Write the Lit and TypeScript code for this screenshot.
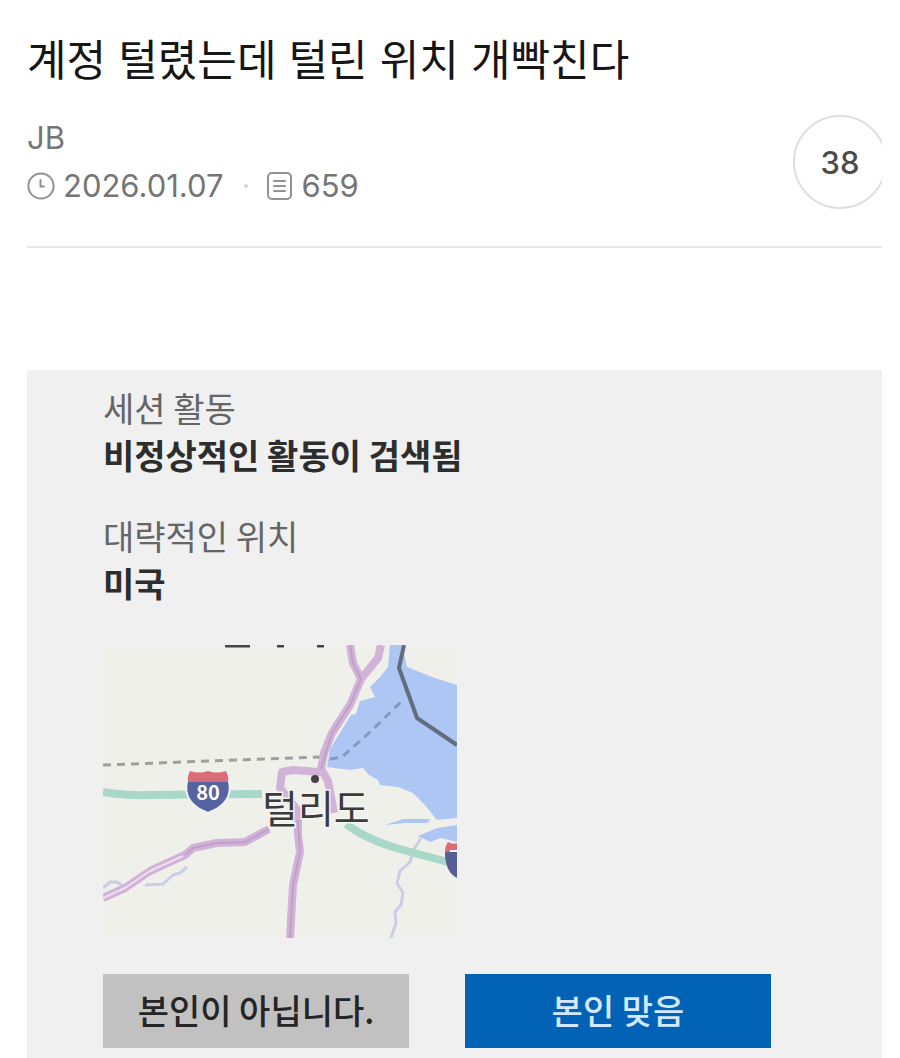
import { LitElement, css, html } from "lit";
import { customElement, property } from "lit/decorators.js";

@customElement("post-header")
class PostHeader extends LitElement {
  @property() heading = "";
  @property() author = "";
  @property() date = "";
  @property() views = "";
  @property() votes = "";

  static styles = css`
    :host {
      display: block;
      border-bottom: 2px solid #e8e8e8;
      overflow: hidden;
    }
    .title {
      margin: 0;
      padding-top: 28px;
      font-size: 43px;
      line-height: 64px;
      font-weight: 400;
      color: #161616;
    }
    .info {
      display: flex;
      align-items: center;
      justify-content: space-between;
      padding: 22px 0 36px;
    }
    .meta {
      color: #757575;
      font-size: 31px;
      line-height: 48px;
    }
    .row {
      display: flex;
      align-items: center;
    }
    .icon {
      width: 28px;
      height: 28px;
      fill: none;
      stroke: #929292;
      stroke-width: 2;
      stroke-linecap: round;
    }
    .date {
      margin-left: 8px;
    }
    .dot {
      width: 4px;
      height: 4px;
      margin: 0 18px 0 20px;
      border-radius: 50%;
      background: #d4d4d4;
    }
    .views {
      margin-left: 8px;
    }
    .votes {
      box-sizing: border-box;
      width: 94px;
      height: 94px;
      margin-right: -5px;
      padding: 0;
      border: 2px solid #dedede;
      border-radius: 50%;
      background: #fff;
      color: #4c4c4c;
      font: inherit;
      font-size: 31px;
      font-weight: 500;
    }
  `;

  render() {
    return html`
      <h1 class="title">${this.heading}</h1>
      <div class="info">
        <div class="meta">
          <div>${this.author}</div>
          <div class="row">
            <svg class="icon" viewBox="0 0 28 28" aria-hidden="true">
              <circle cx="14" cy="14" r="12.6" />
              <path d="M13.5 8v6.5H17" stroke-linejoin="round" />
            </svg>
            <time class="date" datetime="2026-01-07">${this.date}</time>
            <span class="dot"></span>
            <svg class="icon" viewBox="0 0 28 28" aria-hidden="true">
              <rect x="2" y="1" width="23" height="26" rx="4" />
              <path d="M8 9h11M8 14h11M8 19h11" />
            </svg>
            <span class="views">${this.views}</span>
          </div>
        </div>
        <button class="votes" type="button">${this.votes}</button>
      </div>
    `;
  }
}

@customElement("location-map")
class LocationMap extends LitElement {
  static styles = css`
    :host {
      display: block;
    }
    .map {
      display: block;
      width: 100%;
      background: #f0f0eb;
    }
    .line {
      fill: none;
      stroke-linejoin: round;
    }
    .water {
      fill: #adc6f3;
    }
    .road {
      stroke: #d2b3d8;
      stroke-width: 8;
    }
    .core {
      stroke: #c29fca;
      stroke-width: 2;
    }
    .highway {
      stroke: #a9d8c9;
      stroke-width: 8;
    }
    .creek {
      stroke: #c9cee6;
      stroke-width: 3;
    }
    .border {
      stroke: #626d80;
      stroke-width: 4;
    }
    .dash {
      stroke: #a19f9b;
      stroke-width: 3;
      stroke-dasharray: 8 6;
    }
    .wet {
      stroke: #8698bf;
    }
    .city {
      font-size: 39px;
      fill: #3b3b3b;
      stroke: #f4f4f0;
      stroke-width: 3;
      paint-order: stroke;
    }
    .route {
      font-size: 20px;
      font-weight: 700;
      fill: #fff;
    }
  `;

  render() {
    return html`
      <svg class="map" viewBox="0 0 354 293" role="img" aria-label="털리도">
        <path
          class="water"
          d="M287 0L285 22L277 32L267 42L272 52L257 56L253 69L248 70L227 104L224 122L247 125L260 123L266 130L275 135L277 140L295 142L310 148L322 160L334 175L354 173V40L332 33L304 22L299 0Z"
        />
        <path
          class="water"
          d="M282 180L300 174L327 174L325 178L302 178ZM315 191L334 183L354 180V197L338 193L327 197Z"
        />
        <path class="line creek" d="M0 243L7 237L14 237L22 242M42 240L60 239L70 230L77 228L84 222" />
        <path class="line creek" d="M318 193L311 204L307 217L297 226L294 238L300 248L298 260L292 267L293 278L288 293" />
        <path class="line highway" d="M0 147Q25 151 44 150L159 149" />
        <path class="line highway" d="M243 179Q264 195 300 205L345 217" />
        <path class="line dash" d="M0 120L80 117L217 112" />
        <path class="line dash wet" d="M227 114L239 112L267 87L300 55" />
        <path class="line road" d="M247 0L250 18L258 34L247 60L229 88L221 108L218 124L216 127L190 125L179 127L177 143L195 166L195 190L197 207L190 240L187 293" />
        <path class="line road" d="M278 0L275 13L258 34" />
        <path class="line road" d="M218 124L225 136L231 168" />
        <path class="line road" d="M0 253L22 243L47 226L82 210L90 203L114 198L142 197L166 184" />
        <path class="line core" d="M247 0L250 18L258 34L247 60L229 88L218 124" />
        <path class="line core" d="M195 175L197 207L190 240L187 293M82 210L90 203L114 198L142 197L166 184" />
        <path d="M0 253L22 243L47 226L80 211" class="line" stroke="#efe0ef" stroke-width="2" />
        <path class="line border" d="M301 0L296 23L314 73L354 100" />
        <path d="M122 1h25M174 1h7M214 1h7" class="line" stroke="#444" stroke-width="3" />
        <path
          d="M84 136H126Q131 158 105 168Q79 158 84 136Z"
          fill="#5564a0"
          stroke="#f1f2f5"
          stroke-width="2"
        />
        <path d="M85 137Q84 132 87 126Q96 129 105 126Q114 129 123 126Q126 132 125 137Z" fill="#d86d78" />
        <text class="route" x="105" y="155" text-anchor="middle">80</text>
        <path d="M342 207H354V233Q342 227 342 207Z" fill="#555f94" />
        <path d="M342 207Q342 201 345 197Q350 200 354 198V207Z" fill="#d86d78" />
        <path d="M347 206h7" stroke="#fff" stroke-width="2" />
        <circle cx="212" cy="134" r="4" fill="#4a3f4a" />
        <text class="city" x="159" y="178">털리도</text>
      </svg>
    `;
  }
}

@customElement("activity-panel")
class ActivityPanel extends LitElement {
  static styles = css`
    :host {
      display: block;
      box-sizing: border-box;
      padding: 14px 111px 10px 76px;
      background: #f0f0f0;
      font-size: 34px;
      line-height: 47px;
    }
    .facts {
      display: grid;
      gap: 34px;
      margin: 0;
    }
    .label {
      color: #656565;
    }
    .value {
      margin: 0;
      color: #2d2d2d;
      font-weight: 700;
    }
    .place {
      max-width: 354px;
      margin: 39px 0 36px;
    }
    .actions {
      display: grid;
      grid-template-columns: 1fr 1fr;
      gap: 56px;
    }
    .action {
      height: 74px;
      padding: 0 0 4px;
      border: 0;
      font: inherit;
      font-weight: 500;
      white-space: nowrap;
    }
    .deny {
      background: #c1c1c1;
      color: #252525;
    }
    .confirm {
      background: #0262b6;
      color: #d3e8fa;
    }
  `;

  render() {
    return html`
      <dl class="facts">
        <div>
          <dt class="label">세션 활동</dt>
          <dd class="value">비정상적인 활동이 검색됨</dd>
        </div>
        <div>
          <dt class="label">대략적인 위치</dt>
          <dd class="value">미국</dd>
        </div>
      </dl>
      <location-map class="place"></location-map>
      <div class="actions">
        <button class="action deny" type="button">본인이 아닙니다.</button>
        <button class="action confirm" type="button">본인 맞음</button>
      </div>
    `;
  }
}

@customElement("app-root")
class AppRoot extends LitElement {
  static styles = css`
    :host {
      display: flex;
      flex-direction: column;
      box-sizing: border-box;
      min-height: 100vh;
      padding: 0 18px 0 27px;
      background: #fff;
      font-family: Inter, "Noto Sans CJK KR", sans-serif;
    }
    .panel {
      flex: 1;
      margin-top: 122px;
      font-family: "Noto Sans CJK KR", sans-serif;
    }
  `;

  render() {
    return html`
      <post-header
        heading="계정 털렸는데 털린 위치 개빡친다"
        author="JB"
        date="2026.01.07"
        views="659"
        votes="38"
      ></post-header>
      <activity-panel class="panel"></activity-panel>
    `;
  }
}
